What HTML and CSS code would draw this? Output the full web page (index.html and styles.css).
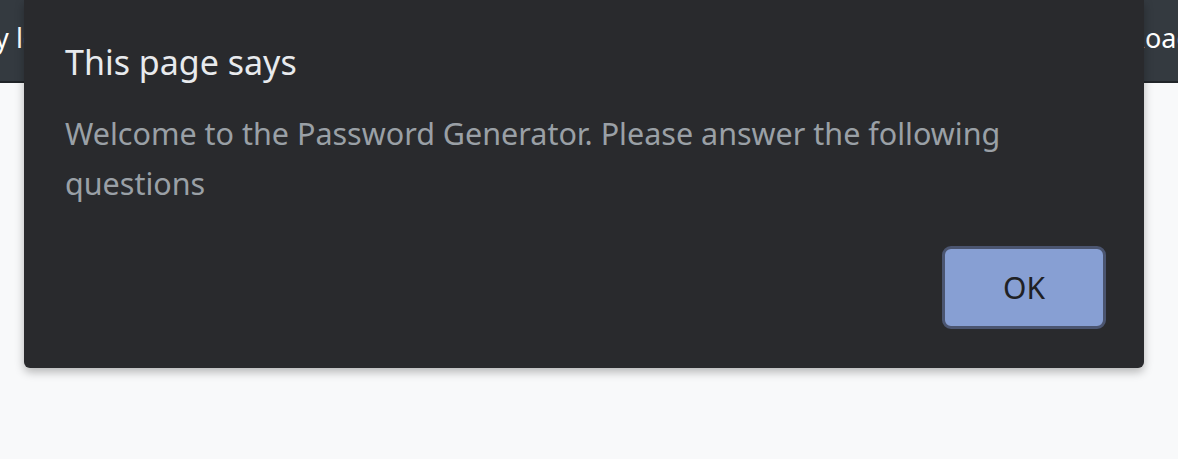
FILE: index.html
```html
<!DOCTYPE html>
<html>
<head>
<meta charset="utf-8">
<link rel="stylesheet" href="styles.css">
</head>
<body>
<header class="navbar">
  <span class="brand">Easy login</span>
  <span class="nav-right">Roadmap</span>
</header>
<main class="page"></main>
<div class="dialog" role="alertdialog">
  <h2 class="dialog-title">This page says</h2>
  <p class="dialog-message">Welcome to the Password Generator. Please answer the following questions</p>
  <div class="dialog-actions">
    <button class="ok-btn">OK</button>
  </div>
</div>
</body>
</html>
```
FILE: styles.css
```css
html, body {
  margin: 0;
  padding: 0;
  height: 100%;
  background: #f8f9fa;
  font-family: "Noto Sans", "Open Sans", sans-serif;
  overflow: hidden;
}
.navbar {
  height: 81px;
  background: #343a40;
  border-bottom: 2px solid #212529;
  display: flex;
  align-items: center;
  justify-content: space-between;
  color: #fff;
  font-size: 27px;
}
.brand {
  margin-left: -48px;
  margin-top: -6px;
}
.nav-right {
  margin-right: -72px;
  margin-top: -6px;
}
.dialog {
  position: absolute;
  left: 24px;
  top: 0;
  width: 1120px;
  height: 368px;
  background: #292a2d;
  border-radius: 0 0 6px 6px;
  box-shadow: 0 4px 10px rgba(0,0,0,0.28);
  box-sizing: border-box;
  padding: 36px 38px 0 41px;
  display: flex;
  flex-direction: column;
}
.dialog-title {
  margin: 0;
  font-weight: 400;
  font-size: 34px;
  line-height: 52px;
  color: #e8eaed;
}
.dialog-message {
  margin: 20px 0 0 0;
  font-size: 30.5px;
  line-height: 50px;
  color: #9aa0a6;
}
.dialog-actions {
  display: flex;
  justify-content: flex-end;
  margin-top: 38px;
}
.ok-btn {
  width: 164px;
  height: 83px;
  background: #879fd3;
  border: 3px solid #4b5570;
  border-radius: 9px;
  font-family: inherit;
  font-size: 30px;
  color: #202124;
}
```
